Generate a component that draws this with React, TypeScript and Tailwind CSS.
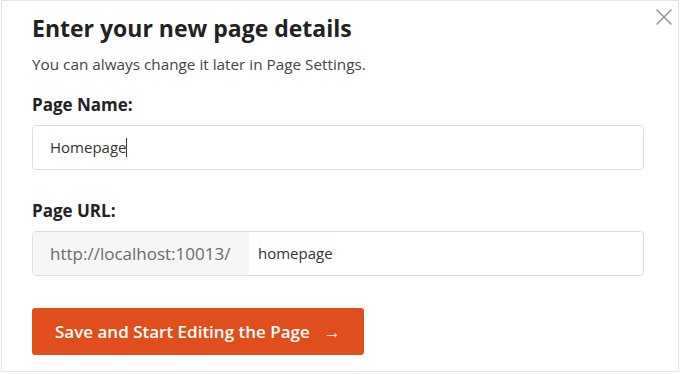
import React from "react";

export default function App() {
  return (
    <div className="w-[680px] h-[374px] bg-white" style={{ fontFamily: "'Open Sans', sans-serif" }}>
      <div className="relative ml-[1px] w-[678px] h-[372px] border border-[#e6e6e6] bg-white pl-[30px] pr-[34px] pt-[12px]">
        {/* Close */}
        <button className="absolute top-[8px] right-[6px] w-[16px] h-[16px] flex items-center justify-center text-[#8f8f8f]">
          <svg className="w-[16px] h-[16px]" viewBox="0 0 16 16" fill="none" stroke="currentColor" strokeWidth="1.5" strokeLinecap="round">
            <line x1="1" y1="1" x2="15" y2="15" />
            <line x1="15" y1="1" x2="1" y2="15" />
          </svg>
        </button>

        {/* Header */}
        <h1 className="text-[23px] leading-[30px] font-bold text-[#222]">Enter your new page details</h1>
        <p className="mt-[10px] text-[15.3px] leading-[22px] text-[#444]">You can always change it later in Page Settings.</p>

        {/* Page name */}
        <label className="block mt-[18px] text-[17px] leading-[24px] font-bold text-[#222]">Page Name:</label>
        <div className="mt-[8px] h-[45px] rounded-[4px] border border-[#dedede] flex items-center pl-[17px] text-[15px] text-[#333]">
          Homepage
          <span className="inline-block w-px h-[19px] bg-[#333]" />
        </div>

        {/* Page URL */}
        <label className="block mt-[29px] text-[17px] leading-[24px] font-bold text-[#222]">Page URL:</label>
        <div className="mt-[8px] h-[45px] rounded-[4px] border border-[#dedede] flex overflow-hidden">
          <div className="w-[216px] bg-[#f6f6f6] flex items-center pl-[17px] text-[17px] text-[#6b6b6b]">http://localhost:10013/</div>
          <div className="flex-1 flex items-center pl-[9px] text-[15px] text-[#333]">homepage</div>
        </div>

        {/* Save */}
        <button className="mt-[32px] h-[47px] w-[332px] rounded-[3px] bg-[#e04e1e] text-white text-[17px] font-semibold flex items-center pl-[23px]">
          Save and Start Editing the Page
          <span className="ml-[14px] text-[17px] font-bold">→</span>
        </button>
      </div>
    </div>
  );
}
